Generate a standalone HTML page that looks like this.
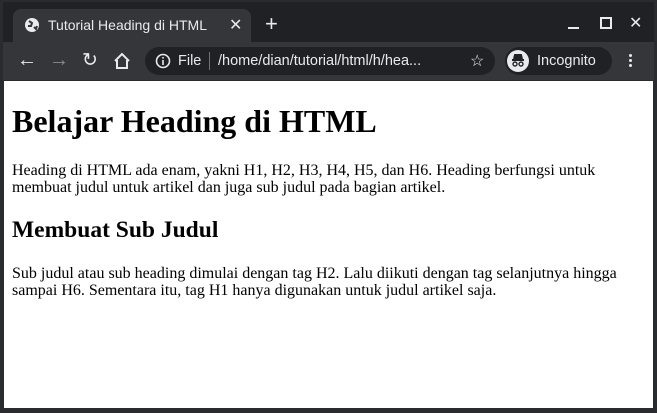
<!DOCTYPE html><html><head><style>
body{margin:0;width:657px;height:413px;background:#2a2b2e;position:relative;overflow:hidden;font-family:"Liberation Sans",sans-serif}
.title{position:absolute;left:3px;top:2px;width:651px;height:40px;background:#202124}
.tab{position:absolute;left:13px;top:9px;width:238px;height:33px;background:#35363a;border-radius:8px 8px 0 0}
.tb{position:absolute;left:3px;top:42px;width:651px;height:38px;background:#35363a}
.omni{position:absolute;left:145px;top:47px;width:350px;height:28px;background:#202124;border-radius:14px}
.inc{position:absolute;left:505px;top:47px;width:107px;height:28px;background:#202124;border-radius:14px}
.page{position:absolute;left:4px;top:81px;width:649px;height:327px;background:#fff;font-family:"Liberation Serif",serif;color:#000}
.t{position:absolute;color:#e8eaed;font-size:13.5px}
h1{position:absolute;left:8px;top:22px;margin:0;font-size:32px}
h2{position:absolute;left:8px;top:135px;margin:0;font-size:23.5px}
p{position:absolute;left:8px;margin:0;font-size:16px;line-height:17px;width:630px}
</style></head><body>
<div class="title"></div><div class="tab"></div>
<svg style="position:absolute;left:24px;top:17px" width="16" height="16"><circle cx="8" cy="8" r="7" fill="#e8eaed"/><path d="M5 4l3 2-1 3-3 0M10 10l2 2 1-3" stroke="#35363a" stroke-width="2" fill="none"/></svg>
<div class="t" style="left:48px;top:17px;font-size:14px">Tutorial Heading di HTML</div>
<div class="t" style="left:229px;top:15px;font-size:16px">✕</div>
<div class="t" style="left:265px;top:11px;font-size:22px">+</div>
<div style="position:absolute;left:568px;top:27px;width:11px;height:2px;background:#e8eaed"></div>
<div style="position:absolute;left:600px;top:17px;width:8px;height:8px;border:2px solid #e8eaed"></div>
<div class="t" style="left:629px;top:13px;font-size:16px">✕</div>
<div class="tb"></div><div class="omni"></div><div class="inc"></div>
<div class="t" style="left:17px;top:49px;font-size:20px">←</div>
<div class="t" style="left:49px;top:49px;font-size:20px;color:#8a8b8e">→</div>
<div class="t" style="left:82px;top:49px;font-size:19px">↻</div>
<svg style="position:absolute;left:113px;top:52px" width="18" height="18"><path d="M2 9L9 2l7 7M4 8v8h10V8" stroke="#e8eaed" stroke-width="2" fill="none"/></svg>
<svg style="position:absolute;left:155px;top:53px" width="16" height="16"><circle cx="8" cy="8" r="6.5" stroke="#e8eaed" stroke-width="1.6" fill="none"/><rect x="7.2" y="7" width="1.6" height="5" fill="#e8eaed"/><rect x="7.2" y="4" width="1.6" height="1.6" fill="#e8eaed"/></svg>
<div class="t" style="left:178px;top:53px;font-size:14.5px">File</div>
<div style="position:absolute;left:209px;top:52px;width:1px;height:18px;background:#6f7175"></div>
<div class="t" style="left:218px;top:53px;font-size:14.5px">/home/dian/tutorial/html/h/hea...</div>
<div class="t" style="left:470px;top:51px;font-size:16px">☆</div>
<svg style="position:absolute;left:507px;top:50px" width="22" height="22"><circle cx="11" cy="11" r="11" fill="#e8eaed"/><path d="M5 10h12M7 9l1-4h6l1 4" stroke="#202124" stroke-width="2" fill="#202124"/><circle cx="8" cy="14" r="2" stroke="#202124" fill="none" stroke-width="1.4"/><circle cx="14" cy="14" r="2" stroke="#202124" fill="none" stroke-width="1.4"/></svg>
<div class="t" style="left:537px;top:53px;font-size:14.5px">Incognito</div>
<div style="position:absolute;left:629px;top:54px;width:3px;height:3px;background:#e8eaed;border-radius:2px;box-shadow:0 5px #e8eaed,0 10px #e8eaed"></div>
<div class="page">
<h1>Belajar Heading di HTML</h1>
<p style="top:81px">Heading di HTML ada enam, yakni H1, H2, H3, H4, H5, dan H6. Heading berfungsi untuk membuat judul untuk artikel dan juga sub judul pada bagian artikel.</p>
<h2 style="top:136px">Membuat Sub Judul</h2>
<p style="top:184px">Sub judul atau sub heading dimulai dengan tag H2. Lalu diikuti dengan tag selanjutnya hingga sampai H6. Sementara itu, tag H1 hanya digunakan untuk judul artikel saja.</p>
</div>
</body></html>
